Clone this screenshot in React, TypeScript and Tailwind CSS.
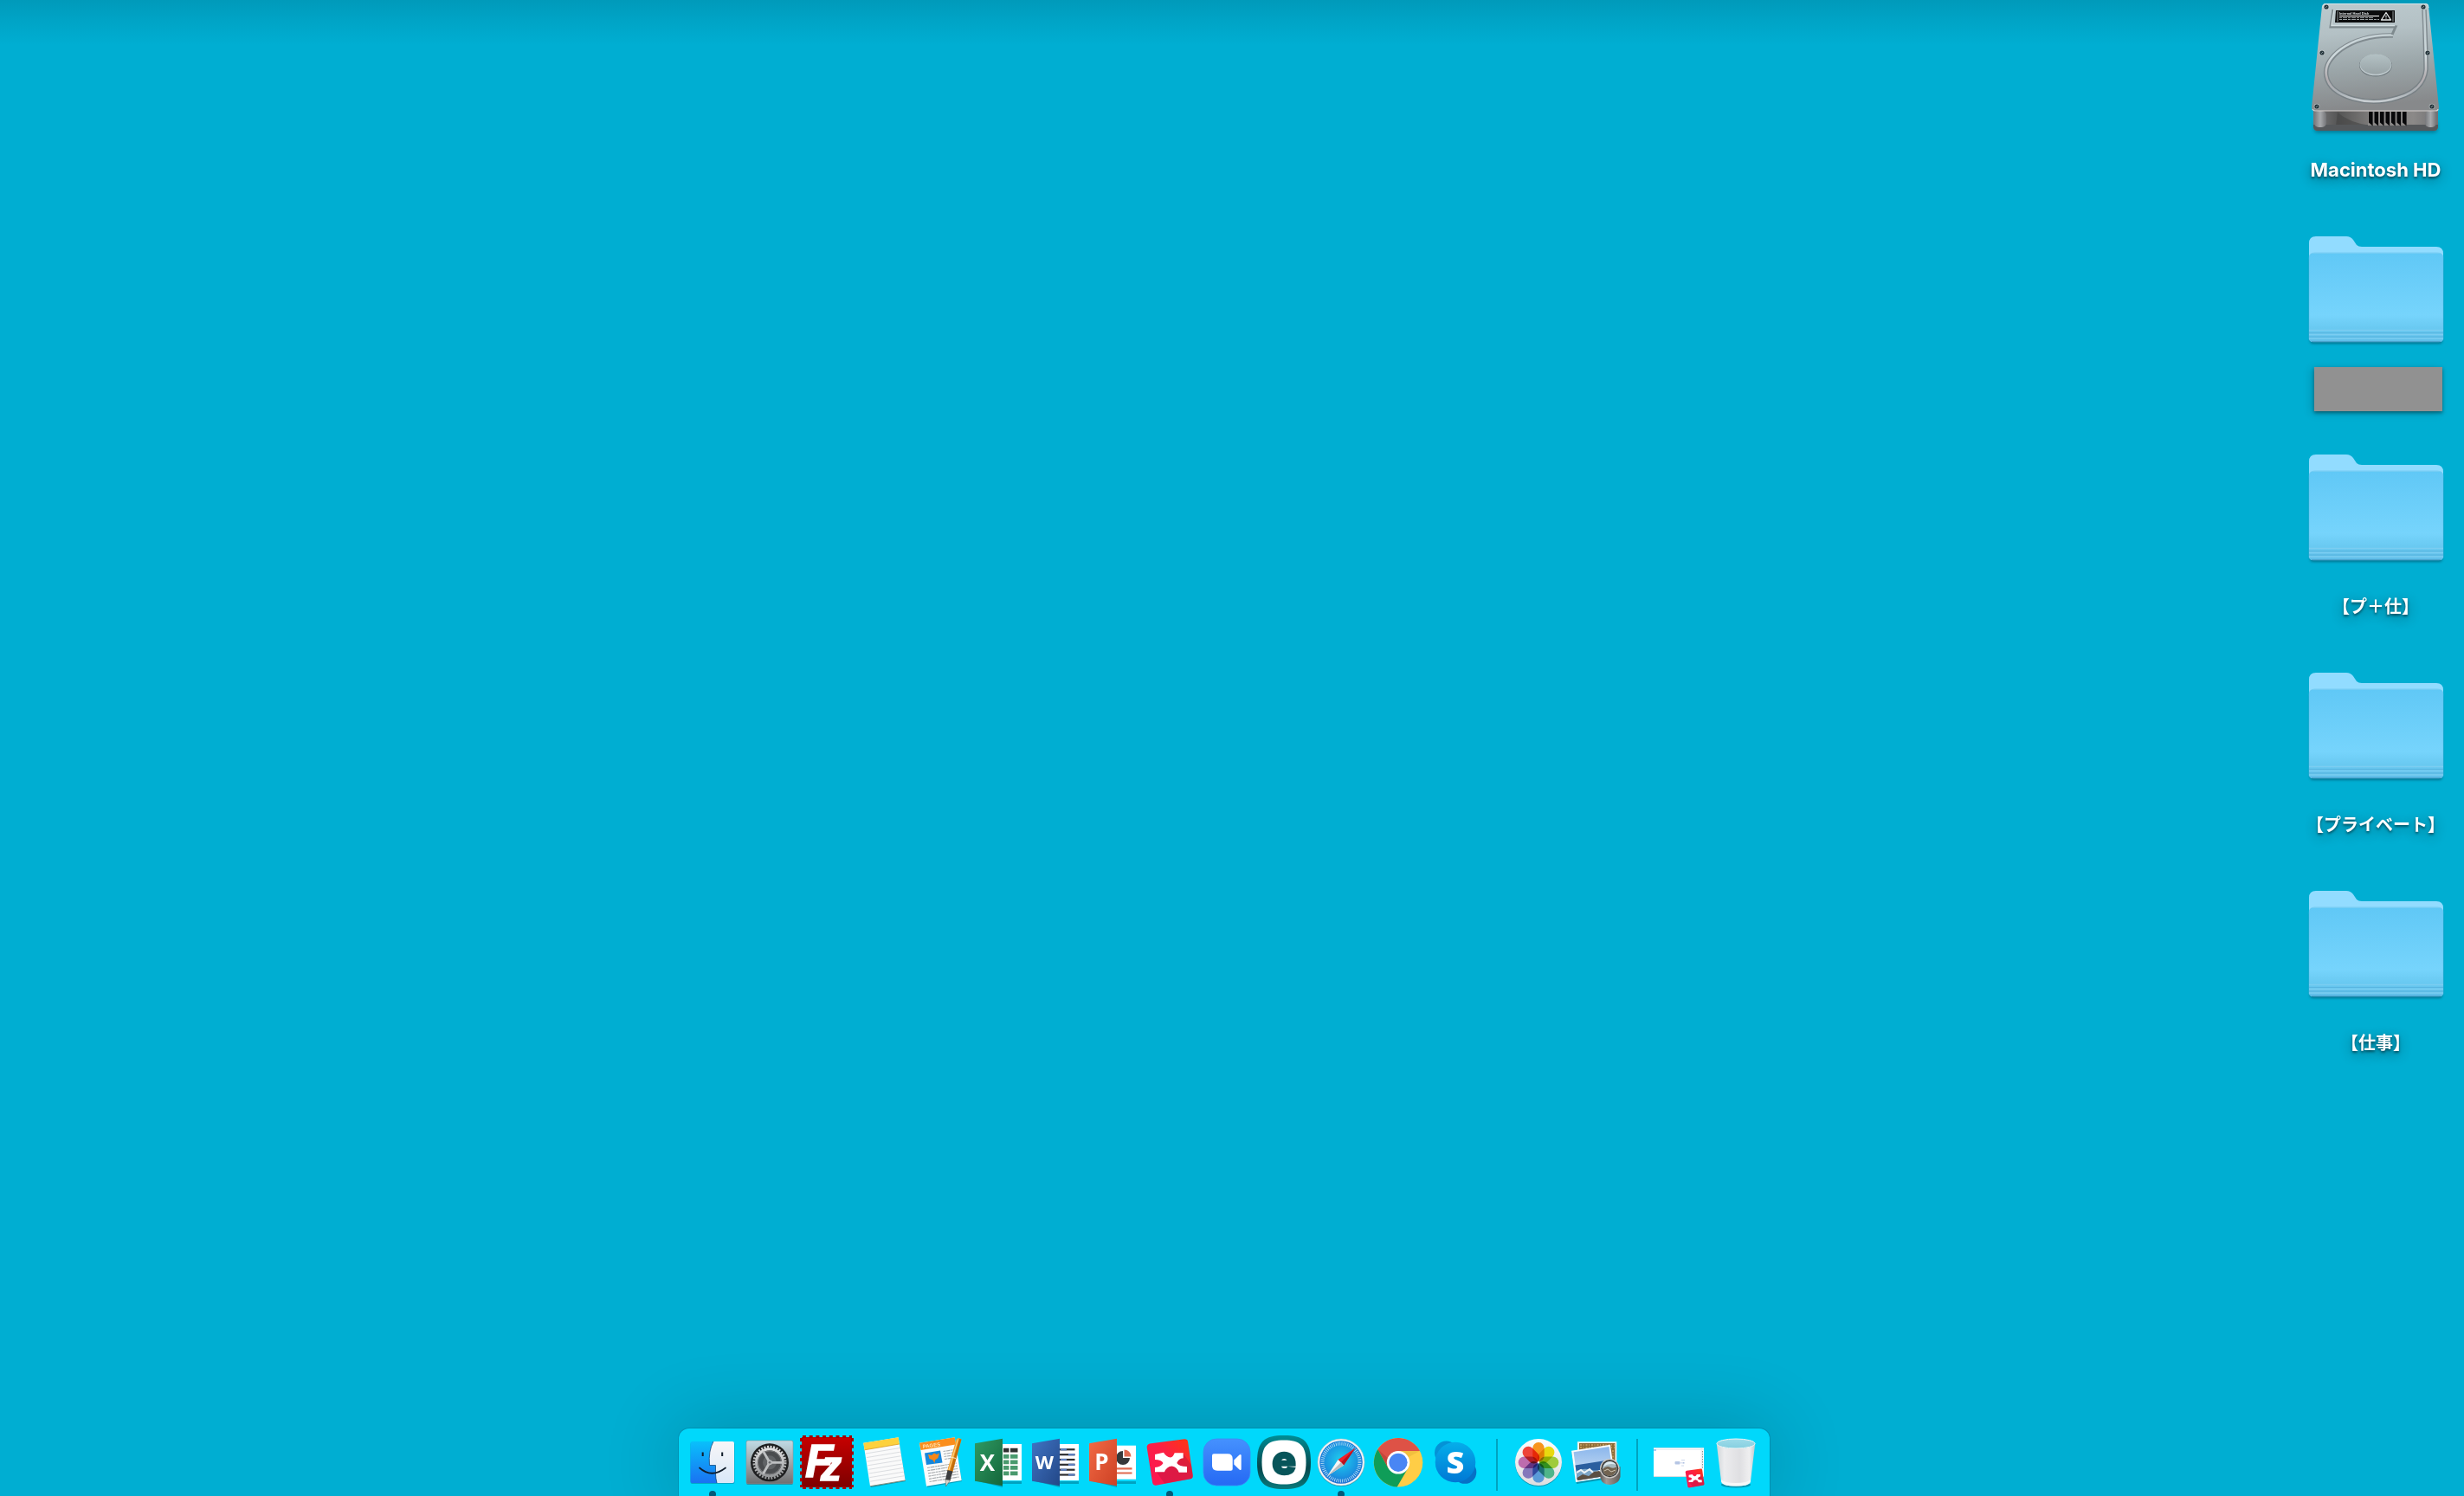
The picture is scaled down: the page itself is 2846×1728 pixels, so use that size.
import type { ReactNode } from 'react';

/* ---------- Desktop icons ---------- */

function HardDrive() {
  const screws: [number, number][] = [
    [23, 8], [135, 8], [18, 61], [140, 61], [12, 123], [145, 123],
  ];
  return (
    <svg viewBox="0 0 160 160" className="size-40" aria-hidden="true">
      <defs>
        <linearGradient id="hdTop" x1="0" y1="0" x2="0.12" y2="1">
          <stop offset="0" stopColor="#bccace" />
          <stop offset="0.3" stopColor="#b4c1c5" />
          <stop offset="0.62" stopColor="#9ca7aa" />
          <stop offset="1" stopColor="#87898b" />
        </linearGradient>
        <linearGradient id="hdFront" x1="0" y1="0" x2="1" y2="0">
          <stop offset="0" stopColor="#7b7b7d" />
          <stop offset="0.2" stopColor="#555" />
          <stop offset="0.45" stopColor="#7c7a79" />
          <stop offset="0.8" stopColor="#8b8988" />
          <stop offset="1" stopColor="#727274" />
        </linearGradient>
        <linearGradient id="hdPost" x1="0" y1="0" x2="1" y2="0">
          <stop offset="0" stopColor="#77787b" />
          <stop offset="0.5" stopColor="#a7a9ac" />
          <stop offset="1" stopColor="#737477" />
        </linearGradient>
        <linearGradient id="hdHub" x1="0" y1="0" x2="0" y2="1">
          <stop offset="0" stopColor="#b4c2c5" />
          <stop offset="1" stopColor="#98a3a6" />
        </linearGradient>
        <linearGradient id="hdRing" x1="0" y1="0" x2="0" y2="1">
          <stop offset="0" stopColor="#b9c6ca" />
          <stop offset="0.5" stopColor="#cfdadd" />
          <stop offset="0.75" stopColor="#b3adb0" />
          <stop offset="0.9" stopColor="#a9b0b5" />
          <stop offset="1" stopColor="#c8ced2" />
        </linearGradient>
        <filter id="hdBlur" x="-10%" y="-50%" width="120%" height="200%">
          <feGaussianBlur stdDeviation="2" />
        </filter>
      </defs>
      <rect x="9" y="140" width="142" height="13" rx="4" fill="#00465a" opacity=".55" filter="url(#hdBlur)" />
      <path d="M8 126H152V146Q152 151 147 151H13Q8 151 8 146Z" fill="url(#hdFront)" />
      <path d="M36 130Q50 142 74 145H34Z" fill="#444" opacity=".6" />
      <path d="M8 144H152V146Q152 151 147 151H13Q8 151 8 146Z" fill="#55585b" />
      <rect x="9" y="128" width="14" height="19" rx="5" fill="url(#hdPost)" />
      <rect x="137" y="128" width="13" height="19" rx="5" fill="url(#hdPost)" />
      <rect x="71" y="129" width="45" height="16" fill="#8b8988" />
      {[72, 78.500, 85, 91.500, 98, 104.500, 111].map((x) => (
        <path key={x} d={`M${x} 129h4.600v16.500l-4.600-4Z`} fill="#08080a" />
      ))}
      <path d="M22 4H138Q141 4 141 7L153 124Q153 128 149 128H10Q6 128 6 124L18 7Q19 4 22 4Z" fill="url(#hdTop)" />
      <path d="M7 126Q8 128 10 128H149Q152 128 152 126" fill="none" stroke="#d5cfcd" strokeWidth="1.2" />
      <path d="M19 9Q19 4.500 22 4.500H138Q141 5 141 9" fill="none" stroke="#dbe5e8" strokeWidth="1" />
      <path d="M100 41Q64 40 40 57Q20 72 23 88Q26 106 54 114Q79 121 105 113Q136 104 138 80Q138 60 136 11" fill="none" stroke="#717b80" strokeWidth="5.500" opacity=".75" />
      <path d="M100 40.500Q64 39.500 40 56.500Q20 71.500 23 87.500Q26 106 54 114Q79 121 105 113Q136 104 138 80Q138 60 136 11" fill="none" stroke="url(#hdRing)" strokeWidth="2.600" />
      <path d="M31 11L28 31H103L99 40" fill="none" stroke="#7e8a8e" strokeWidth="3" />
      <path d="M32 11L29 29.500H102" fill="none" stroke="#d3dee1" strokeWidth="1.500" />
      <ellipse cx="80" cy="75.500" rx="19" ry="13" fill="#6f797d" />
      <ellipse cx="80" cy="75" rx="18.500" ry="12.300" fill="#bec9cd" />
      <ellipse cx="80" cy="74" rx="18" ry="11.800" fill="url(#hdHub)" />
      <path d="M34 12H102V26H33Z" fill="#0b0c0d" />
      <path d="M36 13V25M100 13V25" stroke="#8d9496" strokeWidth="1" />
      <text x="38" y="17" fontSize="4" fontWeight="700" fill="#dfe3e4" fontFamily="Liberation Sans, sans-serif">Internal Hard Disk</text>
      <path d="M38 18.500H84" stroke="#fff" strokeWidth="1" />
      <path d="M38 20.500H78M38 22.500H84" stroke="#9aa0a2" strokeWidth="1" strokeDasharray="3 1 5 1" />
      <path d="M92 14.500L97.500 23H86.500Z" fill="none" stroke="#e6eaeb" strokeWidth="1.300" strokeLinejoin="round" />
      <path d="M92 17.500V20.500M92 21.300V22" stroke="#e6eaeb" strokeWidth="1" />
      {screws.map(([x, y]) => (
        <g key={`${x}-${y}`}>
          <circle cx={x} cy={y} r="3.300" fill="#d3dcdf" opacity=".55" />
          <circle cx={x} cy={y} r="2.600" fill="#26363c" />
          <path d={`M${x - 1} ${y + 1}l2 -2`} stroke="#7b8c92" strokeWidth="1" />
        </g>
      ))}
    </svg>
  );
}

function Folder() {
  return (
    <svg viewBox="0 0 160 160" className="size-40" aria-hidden="true">
      <defs>
        <linearGradient id="folderFront" x1="0" y1="0" x2="0" y2="1">
          <stop offset="0" stopColor="#60c8f6" />
          <stop offset="0.7" stopColor="#76d4fc" />
          <stop offset="0.86" stopColor="#68c8f0" />
          <stop offset="1" stopColor="#5fbde8" />
        </linearGradient>
        <filter id="folderBlur" x="-10%" y="-10%" width="120%" height="130%">
          <feGaussianBlur stdDeviation="1.500" />
        </filter>
      </defs>
      <rect x="4" y="46" width="153" height="99" rx="4" fill="#003e52" opacity=".55" filter="url(#folderBlur)" />
      <path d="M3 29Q3 21 11 21H46Q51 21 54 25L58 31Q60 33 64 33H150Q158 33 158 41V138Q158 143 153 143H8Q3 143 3 138Z" fill="#92dcff" />
      <path d="M3 46Q3 40 10 40H151Q158 40 158 46V140Q157 143 153 143H8Q4 143 3 140Z" fill="url(#folderFront)" stroke="#59bde8" strokeWidth=".5" />
      <path d="M6 40.500H155" stroke="#74cdf4" strokeWidth="1" />
      <path d="M3 129.500H158M3 134.500H158M3 139H158" stroke="#7bcdf1" strokeWidth="1.500" />
      <path d="M3 132.500H158M3 137H158" stroke="#58b5e0" strokeWidth="1.200" />
      <path d="M6 142.500H155" stroke="#4aa2cc" strokeWidth="1.200" />
    </svg>
  );
}

type DesktopItem = { id: string; label?: string; icon: ReactNode };

const desktopItems: DesktopItem[] = [
  { id: 'hd', label: 'Macintosh HD', icon: <HardDrive /> },
  { id: 'hidden', icon: <Folder /> },
  { id: 'both', label: '【プ＋仕】', icon: <Folder /> },
  { id: 'private', label: '【プライベート】', icon: <Folder /> },
  { id: 'work', label: '【仕事】', icon: <Folder /> },
];

function DesktopIcon({ item }: { item: DesktopItem }) {
  return (
    <button
      type="button"
      aria-label={item.label ?? 'Folder'}
      className="flex h-[252px] w-[180px] flex-col items-center"
    >
      {item.icon}
      {item.label ? (
        <span
          className={
            item.id === 'hd'
              ? "mt-5 whitespace-nowrap font-['Inter',sans-serif] text-[22px] leading-8 font-bold text-white [text-shadow:0_2px_3px_rgba(0,0,0,0.5),0_4px_14px_rgba(0,0,0,0.4)]"
              : "mt-5 whitespace-nowrap font-['Noto_Sans_CJK_JP',sans-serif] text-[20px] leading-8 font-bold text-white [text-shadow:0_2px_3px_rgba(0,0,0,0.5),0_4px_14px_rgba(0,0,0,0.45)]"
          }
        >
          {item.label}
        </span>
      ) : (
        <span className="mt-3 ml-1.5 h-[51px] w-[148px] bg-[#919191] shadow-[0_2px_4px_rgba(0,0,0,0.4),-3px_2px_10px_rgba(0,0,0,0.15)]" />
      )}
    </button>
  );
}

/* ---------- Dock icons ---------- */

function Glyph({ children }: { children: ReactNode }) {
  return (
    <svg viewBox="0 0 66 66" className="size-[66px]" aria-hidden="true">
      {children}
    </svg>
  );
}

function Finder() {
  return (
    <Glyph>
      <defs>
        <linearGradient id="finderL" x1="0" y1="0" x2="0" y2="1">
          <stop offset="0" stopColor="#09c0fb" />
          <stop offset="1" stopColor="#1a72f2" />
        </linearGradient>
        <linearGradient id="finderR" x1="0" y1="0" x2="0" y2="1">
          <stop offset="0" stopColor="#f7f6f8" />
          <stop offset="1" stopColor="#d9e8f8" />
        </linearGradient>
      </defs>
      <rect x="7.500" y="10" width="51" height="48" rx="2" fill="#00627c" opacity=".4" />
      <rect x="7.500" y="9" width="50.500" height="48" rx="2" fill="url(#finderL)" />
      <path d="M34 9H56Q58 9 58 11V55Q58 57 56 57H38Q36.500 51 36.500 46V36.500H29.500Q28 19 34 9Z" fill="url(#finderR)" />
      <path d="M34 9Q28 20 29.500 36.500H36.500V46Q36.500 52 38 57" fill="none" stroke="#12477c" strokeWidth=".8" />
      <path d="M21.700 21.500V26M44.200 21.500V26" stroke="#111d2b" strokeWidth="2" />
      <path d="M18 39.500Q32 52 48 39.500" fill="none" stroke="#111d2b" strokeWidth="1.700" strokeLinecap="round" />
    </Glyph>
  );
}

function Preferences() {
  return (
    <Glyph>
      <defs>
        <linearGradient id="prefBg" x1="0" y1="0" x2="0" y2="1">
          <stop offset="0" stopColor="#bfdbe6" />
          <stop offset="0.5" stopColor="#a2a8ab" />
          <stop offset="1" stopColor="#6f6f70" />
        </linearGradient>
        <linearGradient id="prefGear" x1="0" y1="0" x2="0" y2="1">
          <stop offset="0" stopColor="#dededf" />
          <stop offset="1" stopColor="#96989a" />
        </linearGradient>
      </defs>
      <rect x="6" y="8" width="54" height="51" rx="2" fill="#004d60" opacity=".5" />
      <rect x="6" y="8" width="54" height="50" rx="2" fill="url(#prefBg)" stroke="#8f9699" strokeWidth=".6" />
      <circle cx="33" cy="33.300" r="22" fill="#1e1f20" />
      <circle cx="33" cy="33.300" r="18" fill="none" stroke="url(#prefGear)" strokeWidth="3" strokeDasharray="2 1.534" />
      <circle cx="33" cy="33.300" r="15" fill="#4a4c4f" />
      <circle cx="33" cy="33.300" r="8" fill="#606366" />
      <circle cx="33" cy="33.300" r="15.500" fill="none" stroke="url(#prefGear)" strokeWidth="3" />
      <circle cx="33" cy="33.300" r="13.500" fill="none" stroke="#77787a" strokeWidth="1" />
      <path d="M33 33.300H48M33 33.300L25.500 20.300M33 33.300L25.500 46.300" stroke="#bdbfc1" strokeWidth="2.800" />
      <circle cx="33" cy="33.300" r="3" fill="#b7b9bb" />
      <circle cx="33" cy="33.300" r="1.300" fill="#6b6d70" />
    </Glyph>
  );
}

function FileZilla() {
  return (
    <Glyph>
      <defs>
        <linearGradient id="fzBg" x1="0" y1="0" x2="0" y2="1">
          <stop offset="0" stopColor="#c60000" />
          <stop offset="1" stopColor="#7d0000" />
        </linearGradient>
      </defs>
      <rect x="4" y="4" width="58" height="58" fill="url(#fzBg)" />
      <path d="M4 3.500H62M4 62.500H62M3.500 4V62M62.500 4V62" stroke="#a50000" strokeWidth="3" strokeDasharray="4 3.700" strokeDashoffset="-1" />
      <g fill="#fff" stroke="#fff" strokeWidth="1.500" fontFamily="Liberation Sans, sans-serif" fontWeight="700" fontStyle="italic">
        <text x="8" y="49.500" fontSize="53">F</text>
        <text x="26" y="54" fontSize="48">z</text>
      </g>
    </Glyph>
  );
}

function Notes() {
  return (
    <Glyph>
      <path d="M10 14L50 8L58 55L18 62Z" fill="#00566c" opacity=".5" />
      <path d="M9.300 10.700L49.700 4.300L57.700 54L17 60.700Z" fill="#fafafa" />
      {[0, 1, 2, 3, 4, 5, 6, 7].map((i) => (
        <path key={i} d={`M${12 + i * 0.750} ${23 + i * 4.600}l39.500 -6.500`} stroke="#d3d6d9" strokeWidth=".8" />
      ))}
      <path d="M9.300 10.700L49.700 4.300L50.800 12L10.600 18.800Z" fill="#fdd13d" />
      <path d="M10.600 18.800L50.800 12" stroke="#d99c1c" strokeWidth=".8" />
      <path d="M17 60.700L57.700 54" stroke="#7d8e7c" strokeWidth="1" />
    </Glyph>
  );
}

function Pages() {
  return (
    <Glyph>
      <path d="M9 14L49 8L57 55L17 62Z" fill="#00566c" opacity=".45" />
      <path d="M8 10.700L48.700 4.300L56.700 54L16 60.700Z" fill="#fbfbfb" />
      <path d="M8 10.700L48.700 4.300L50 12.500L9.500 19Z" fill="#fb8e1c" />
      <text x="12" y="17" transform="rotate(-8 12 17)" fontSize="6" fontWeight="700" fill="#ffe0ae" fontFamily="Liberation Sans, sans-serif">PAGES</text>
      <path d="M14 22.500L32 19.500L34.500 33.500L16 36Z" fill="#1587dd" />
      <path d="M18 24L22 25L25 22.500L28 24L31 22.500L29.500 28L26 30.500L25.500 34L23.500 30.500L19.500 29Z" fill="#f98617" />
      {[0, 1, 2, 3].map((i) => (
        <path key={i} d={`M${35.500 + i * 0.500} ${20.500 + i * 3}l13 -2`} stroke="#a9adb0" strokeWidth="1.100" strokeDasharray="3 .6 4 .6" />
      ))}
      {[0, 1, 2, 3, 4, 5].map((i) => (
        <path key={i} d={`M${17 + i * 0.500} ${39.500 + i * 3.200}l34 -5.500`} stroke="#a9adb0" strokeWidth="1.200" strokeDasharray="3 .6 5 .6 2 .6" />
      ))}
      <path d="M50.500 6.500Q53 3.500 56.500 6.500L46 45L40 43.500Z" fill="#f5a22c" />
      <path d="M54 6L43 44L46 45L56.500 6.500Z" fill="#c46e0b" />
      <path d="M52.500 6.500L42 42" stroke="#ffd58d" strokeWidth="1" />
      <path d="M44 27L50 28.500" stroke="#f7e7c4" strokeWidth="1" />
      <path d="M40.500 42L46.500 43.500L43.500 54L38 53Z" fill="#3b3c3e" />
      <path d="M38 53L43.500 54L38.500 61Z" fill="#d6d3ca" stroke="#55564f" strokeWidth=".5" />
    </Glyph>
  );
}

type CoverProps = { id: string; letter: string; size: number; baseline: number; light: string; dark: string };

function OfficeCover({ id, letter, size, baseline, light, dark }: CoverProps) {
  return (
    <>
      <defs>
        <linearGradient id={id} x1="0" y1="0" x2="1" y2="1">
          <stop offset="0" stopColor={light} />
          <stop offset="1" stopColor={dark} />
        </linearGradient>
      </defs>
      <path d="M10 55L38 62V58H60V55Z" fill="#00566c" opacity=".4" />
      <path d="M6 11.300L38 5.700V60.300L6 54.700Z" fill={`url(#${id})`} />
      <text x="20.500" y={baseline} textAnchor="middle" fontSize={size} fontWeight="700" fill="#fff" fontFamily="Open Sans, sans-serif">
        {letter}
      </text>
    </>
  );
}

function Excel() {
  return (
    <Glyph>
      <rect x="30" y="12" width="30" height="42" fill="#fff" />
      <path d="M39 16.700H45.500V21.500H39ZM47 16.700H55.500V21.500H47Z" fill="#303131" />
      {[24, 30.500, 37, 43.500].map((y) => (
        <path key={y} d={`M39 ${y}h6.500v4.800h-6.500ZM47 ${y}h8.500v4.800h-8.500Z`} fill="#4a9a6e" />
      ))}
      <OfficeCover id="excelCover" letter="X" size={26} baseline={43} light="#2f9a63" dark="#14663a" />
    </Glyph>
  );
}

function Word() {
  return (
    <Glyph>
      <rect x="30" y="12" width="30" height="42" fill="#fff" />
      {[18.300, 24.200, 30, 35.800, 41.700, 47.500].map((y, i) => (
        <g key={y}>
          <path d={`M38 ${y}h17.500`} stroke="#2d2e30" strokeWidth="2.200" />
          <path d={i % 2 ? `M48 ${y}h7.500` : `M39 ${y}h7`} stroke="#5f82c4" strokeWidth="2.200" />
        </g>
      ))}
      <OfficeCover id="wordCover" letter="W" size={22} baseline={41} light="#3f74c4" dark="#234787" />
    </Glyph>
  );
}

function PowerPoint() {
  return (
    <Glyph>
      <rect x="30" y="13.700" width="30" height="39" fill="#fff" />
      <path d="M45 20A8 8 0 1 0 53 28H45Z" fill="#37383a" />
      <path d="M46.500 18.500A8 8 0 0 1 54.500 26.500H46.500Z" fill="#e0694f" />
      <path d="M38 40.300H55.500M38 45.500H55.500" stroke="#e0694f" strokeWidth="2.200" />
      <OfficeCover id="pptCover" letter="P" size={26} baseline={42} light="#f26a45" dark="#cd4124" />
    </Glyph>
  );
}

function XMindArt({ id }: { id: string }) {
  return (
    <>
      <defs>
        <linearGradient id={id} x1="0" y1="1" x2="1" y2="0">
          <stop offset="0" stopColor="#ff1555" />
          <stop offset="0.55" stopColor="#fb1f45" />
          <stop offset="1" stopColor="#ff3a0c" />
        </linearGradient>
      </defs>
      <path d="M10 11.500L50 6.200Q53.500 6 54 9L59.700 48Q60 51.700 57 52.300L17 59.700Q14 60 13.200 57L6.700 16Q6.300 12.500 10 11.500Z" fill={`url(#${id})`} />
      <path d="M49 23L58 36L59.700 48Q60 51.700 57 52.300L27 57.500L17 43Z" fill="#b8163f" opacity=".45" />
      <path d="M16 24L26 21.700Q29 27 34 27.500Q37 27 38.700 22.300H48.700V28.300Q43 29 41.300 34Q44 38 53 38V44.700H43.700Q41.500 38.500 35.500 37.500Q29.500 38 27 44.300H16V39Q23 38.500 25.500 34Q23.500 30 16 30Z" fill="#fff" />
    </>
  );
}

function Zoom() {
  return (
    <Glyph>
      <defs>
        <linearGradient id="zoomBg" x1="0" y1="0" x2="0" y2="1">
          <stop offset="0" stopColor="#4591fe" />
          <stop offset="1" stopColor="#2569f4" />
        </linearGradient>
      </defs>
      <rect x="6" y="6" width="54" height="54" rx="15" fill="url(#zoomBg)" stroke="#3c8af5" strokeWidth=".8" />
      <path d="M18 23.300H34Q39.700 23.300 39.700 29V40.700Q39.700 42.700 37.700 42.700H22Q16 42.700 16 37V25.300Q16 23.300 18 23.300Z" fill="#fff" />
      <path d="M41.300 30.500L47.500 24.500Q49.700 23 49.700 25.500V40.500Q49.700 43 47.500 41.500L41.300 35.500Z" fill="#fff" />
    </Glyph>
  );
}

function Eset() {
  return (
    <Glyph>
      <defs>
        <linearGradient id="esetBg" x1="0" y1="0" x2="0" y2="1">
          <stop offset="0" stopColor="#008d95" />
          <stop offset="0.6" stopColor="#05484d" />
          <stop offset="1" stopColor="#0a7a7c" />
        </linearGradient>
      </defs>
      <path d="M33 2C56 2 64 9 64 33S56 64 33 64S2 57 2 33S10 2 33 2Z" fill="url(#esetBg)" />
      <path d="M33 7.500C52 7.500 58.500 14 58.500 33S52 58.500 33 58.500S7.500 52 7.500 33S14 7.500 33 7.500Z" fill="#fff" />
      <text x="33" y="47" textAnchor="middle" fontSize="46" fontWeight="800" fill="#08555a" stroke="#08555a" strokeWidth="2.500" fontFamily="Inter, sans-serif">e</text>
    </Glyph>
  );
}

function Safari() {
  return (
    <Glyph>
      <defs>
        <radialGradient id="safariBg" cx=".5" cy=".45" r=".6">
          <stop offset="0" stopColor="#1fd0ee" />
          <stop offset="0.6" stopColor="#1a97e2" />
          <stop offset="1" stopColor="#1f66cf" />
        </radialGradient>
      </defs>
      <circle cx="33" cy="34" r="27" fill="#00566c" opacity=".5" />
      <circle cx="33" cy="33" r="27" fill="#f4f4f5" stroke="#b9c1c6" strokeWidth=".6" />
      <circle cx="33" cy="33" r="24.800" fill="url(#safariBg)" />
      <circle cx="33" cy="33" r="21.500" fill="none" stroke="#d8f1fb" strokeWidth="4" strokeDasharray=".8 1.450" opacity=".85" />
      <path d="M49.500 16.500L36 36.500L29.500 30Z" fill="#f2202a" />
      <path d="M49.500 16.500L36 36.500L33 33Z" fill="#b91320" />
      <path d="M17 49L29.500 30L36 36.500Z" fill="#f5f5f5" />
      <path d="M17 49L33 33L36 36.500Z" fill="#b9bcbf" />
    </Glyph>
  );
}

function Chrome() {
  return (
    <Glyph>
      <circle cx="33" cy="33.300" r="28.300" fill="#ffcd46" />
      <path d="M9.300 18A28.300 28.300 0 0 1 58 20H33L21.500 40Z" fill="#de5246" />
      <path d="M9.300 18A28.300 28.300 0 0 0 31.700 61.500L44.500 39.500L33 46L21.500 40Z" fill="#0f9d58" />
      <path d="M58 20H33L45 27Z" fill="#c79a2b" opacity=".25" />
      <path d="M9.300 18L21.500 40L23 30Z" fill="#7d241d" opacity=".25" />
      <circle cx="33" cy="33.300" r="13.200" fill="#fff" />
      <circle cx="33" cy="33.300" r="10.600" fill="#4986f4" />
    </Glyph>
  );
}

function Skype() {
  return (
    <Glyph>
      <defs>
        <linearGradient id="skypeBg" x1="0" y1="0" x2="0" y2="1">
          <stop offset="0" stopColor="#05aeea" />
          <stop offset="1" stopColor="#0078d5" />
        </linearGradient>
      </defs>
      <circle cx="22.500" cy="22" r="13.500" fill="#0492d6" />
      <circle cx="44" cy="44.500" r="13.300" fill="#0671c6" />
      <circle cx="33" cy="33" r="23.300" fill="url(#skypeBg)" />
      <text x="33" y="45.500" textAnchor="middle" fontSize="36" fontWeight="800" fill="#fff" fontFamily="Open Sans, sans-serif">S</text>
    </Glyph>
  );
}

const petals = ['#f7941d', '#e9d910', '#9fcb3b', '#4fb58a', '#5a9bd8', '#8478bb', '#bd6cae', '#ee4438'];

function Photos() {
  return (
    <Glyph>
      <defs>
        <linearGradient id="photosBg" x1="0" y1="0" x2="0" y2="1">
          <stop offset="0" stopColor="#fdfdfd" />
          <stop offset="1" stopColor="#dcdee0" />
        </linearGradient>
      </defs>
      <circle cx="33" cy="34" r="27" fill="#00566c" opacity=".5" />
      <circle cx="33" cy="33" r="27" fill="url(#photosBg)" />
      <g className="isolate">
        {petals.map((color, i) => (
          <rect
            key={color}
            x="26.300"
            y="10"
            width="13.400"
            height="22.300"
            rx="6.700"
            fill={color}
            transform={`rotate(${i * 45} 33 33.300)`}
            className="mix-blend-multiply"
          />
        ))}
      </g>
      <circle cx="33" cy="33.300" r="1" fill="#fff" />
    </Glyph>
  );
}

function Preview() {
  return (
    <Glyph>
      <defs>
        <linearGradient id="previewSky" x1="0" y1="0" x2="0" y2="1">
          <stop offset="0" stopColor="#8ab6ec" />
          <stop offset="1" stopColor="#d3e3f3" />
        </linearGradient>
        <linearGradient id="previewLoupe" x1="0" y1="0" x2="1" y2="0">
          <stop offset="0" stopColor="#5f5b58" />
          <stop offset="0.3" stopColor="#a09a95" />
          <stop offset="1" stopColor="#615b56" />
        </linearGradient>
      </defs>
      <path d="M12 9.300H57.300V46H12Z" fill="#f5f2ea" />
      <path d="M14 11H55.500V44H14Z" fill="#8c6a35" />
      <path d="M15 13H55M15 16H55M50 19V40M53 19V40" stroke="#c9a565" strokeWidth="1.500" strokeDasharray="2 1.500 1 2" />
      <path d="M5 21L50 14L55 51L11 58Z" fill="#00384a" opacity=".4" />
      <path d="M5 19.700L50 12.700L55 49L10 56Z" fill="#fbfbfb" />
      <path d="M7.500 21.300L48.500 15L53 47.500L12 54Z" fill="url(#previewSky)" />
      <path d="M9.500 36.500L51 30L53 47.500L12 54Z" fill="#2b5f9f" />
      <path d="M10.500 43Q20 39 28 42Q36 44 52 38L53 47.500L12 54Z" fill="#7da6c8" />
      <path d="M11 45L16 42L20 45L26 41L31 46L38 43L42 47" fill="none" stroke="#eef5f9" strokeWidth="2" />
      <path d="M11.500 51L18 47L25 49L31 44L37 43L42 47L53 45V47.500L12 54Z" fill="#5b4f42" />
      <path d="M38.500 41V51Q40 59 50 59Q60 58 61.500 50V38Z" fill="url(#previewLoupe)" />
      <circle cx="49.300" cy="40.300" r="11.300" fill="#c9c7c4" />
      <circle cx="49.300" cy="40.300" r="10" fill="#3a3835" />
      <circle cx="49.300" cy="40.500" r="8.500" fill="#a7b7bd" />
      <path d="M41 41Q46 36 50 39Q54 41 57.500 38Q58.500 47 49 49Q42 48 41 41Z" fill="#716350" />
      <path d="M42 38Q44 32 50 32Q55 33 57 36Q49 33 42 38Z" fill="#dceaf0" />
      <path d="M43 43L47 41L51 44L56 42" fill="none" stroke="#cfc7b4" strokeWidth="1" />
    </Glyph>
  );
}

function MinimizedWindow() {
  return (
    <Glyph>
      <rect x="4" y="16" width="58" height="34" fill="#fff" />
      <path d="M4 16.500H62" stroke="#c3e0ea" strokeWidth="1" />
      <path d="M4 18.500H62" stroke="#e8eef1" strokeWidth="1" />
      <path d="M4 19H7" stroke="#5b9be0" strokeWidth="1" />
      <path d="M4 49.500H62" stroke="#d9dde0" strokeWidth="1" />
      <path d="M59.500 17V50" stroke="#eceef0" strokeWidth="2" />
      <path d="M60.500 20V40" stroke="#8d9599" strokeWidth="1" strokeDasharray="1.500 1.500" />
      <rect x="28.500" y="32" width="6" height="3.500" rx="1" fill="#b6c6e4" />
      <path d="M35 33.800H37M36 30.500H40M36 37H39" stroke="#cdd8ec" strokeWidth="1" />
      <path d="M37.500 33.800H39.500" stroke="#a9bcdf" strokeWidth="1.500" />
      <svg x="38" y="38" width="27" height="27" viewBox="0 0 66 66">
        <XMindArt id="xmindBadge" />
      </svg>
    </Glyph>
  );
}

function Trash() {
  return (
    <Glyph>
      <defs>
        <linearGradient id="trashBody" x1="0" y1="0" x2="1" y2="0">
          <stop offset="0" stopColor="#cfd5d8" />
          <stop offset="0.2" stopColor="#ececee" />
          <stop offset="0.6" stopColor="#dfdfe2" />
          <stop offset="0.85" stopColor="#efeff0" />
          <stop offset="1" stopColor="#bcc8cd" />
        </linearGradient>
        <linearGradient id="trashInside" x1="0" y1="0" x2="0" y2="1">
          <stop offset="0" stopColor="#9ddcea" />
          <stop offset="1" stopColor="#86cfe0" />
        </linearGradient>
      </defs>
      <ellipse cx="33" cy="59" rx="17" ry="3.500" fill="#00566c" opacity=".5" />
      <path d="M10.700 11L16 55Q17 60.500 33 60.500T50 55L55.300 11Q52 17 33 17T10.700 11Z" fill="url(#trashBody)" />
      <path d="M16 53Q20 57 33 57T50 53L49.800 56Q48 60.500 33 60.500T16.300 56Z" fill="#f7f8f8" />
      <ellipse cx="33" cy="11.500" rx="22" ry="5.500" fill="url(#trashInside)" stroke="#f0f5f6" strokeWidth="1" />
    </Glyph>
  );
}

/* ---------- Dock ---------- */

type DockApp = { name: string; icon: ReactNode; running?: boolean };

const apps: DockApp[] = [
  { name: 'Finder', icon: <Finder />, running: true },
  { name: 'System Preferences', icon: <Preferences /> },
  { name: 'FileZilla', icon: <FileZilla /> },
  { name: 'Notes', icon: <Notes /> },
  { name: 'Pages', icon: <Pages /> },
  { name: 'Excel', icon: <Excel /> },
  { name: 'Word', icon: <Word /> },
  { name: 'PowerPoint', icon: <PowerPoint /> },
  { name: 'XMind', icon: <Glyph><XMindArt id="xmindMain" /></Glyph>, running: true },
  { name: 'Zoom', icon: <Zoom /> },
  { name: 'ESET', icon: <Eset /> },
  { name: 'Safari', icon: <Safari />, running: true },
  { name: 'Chrome', icon: <Chrome /> },
  { name: 'Skype', icon: <Skype /> },
];

const recent: DockApp[] = [
  { name: 'Photos', icon: <Photos /> },
  { name: 'Preview', icon: <Preview /> },
];

const tray: DockApp[] = [
  { name: 'XMind window', icon: <MinimizedWindow /> },
  { name: 'Trash', icon: <Trash /> },
];

function DockButton({ app }: { app: DockApp }) {
  return (
    <button type="button" aria-label={app.name} className="relative size-[66px] shrink-0">
      {app.icon}
      {app.running && <span className="absolute top-full left-1/2 size-2 -translate-x-1/2 rounded-full bg-[#005a78]" />}
    </button>
  );
}

function Separator() {
  return (
    <div className="flex w-[30px] shrink-0 justify-center pt-1.5">
      <div className="h-[60px] w-0.5 bg-[#00a3bf]" />
    </div>
  );
}

export default function App() {
  return (
    <div className="flex min-h-screen flex-col justify-between overflow-hidden bg-[#00aed2] bg-[linear-gradient(to_bottom,#009aba_0px,#00a4c6_24px,#00aed2_52px)]">
      <main className="flex flex-col items-end pr-3">
        {desktopItems.map((item) => (
          <DesktopIcon key={item.id} item={item} />
        ))}
      </main>
      <footer className="flex justify-center pr-[18px]">
        <nav
          aria-label="Dock"
          className="flex h-[78px] rounded-t-xl bg-[#00d8fb] px-1.5 pt-1.5 shadow-[0_0_0_1px_rgba(0,110,140,0.35),0_0_90px_rgba(0,0,0,0.2)]"
        >
          {apps.map((app) => (
            <DockButton key={app.name} app={app} />
          ))}
          <Separator />
          {recent.map((app) => (
            <DockButton key={app.name} app={app} />
          ))}
          <Separator />
          {tray.map((app) => (
            <DockButton key={app.name} app={app} />
          ))}
        </nav>
      </footer>
    </div>
  );
}
